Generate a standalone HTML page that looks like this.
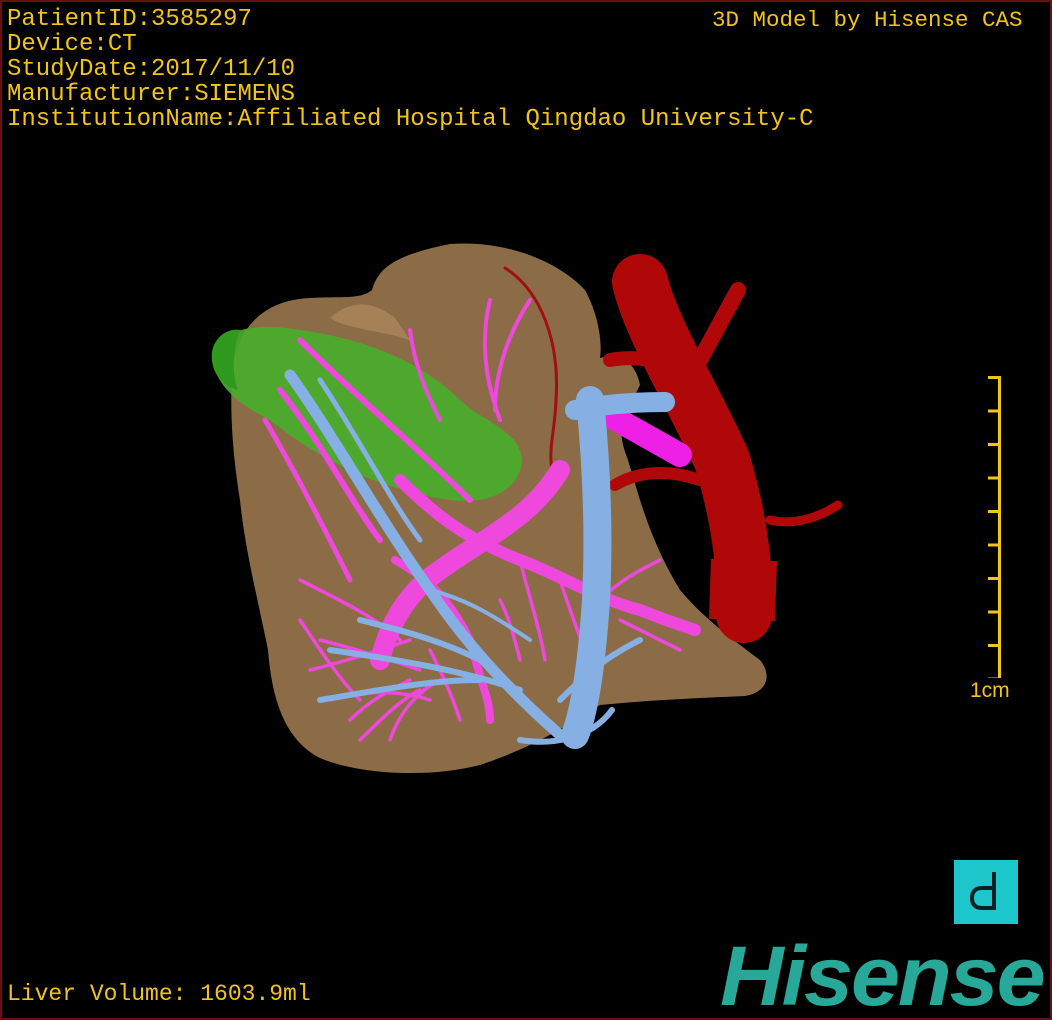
<!DOCTYPE html>
<html><head><meta charset="utf-8"><style>
html,body{margin:0;padding:0;background:#000;}
#w{position:relative;width:1052px;height:1020px;background:#000;overflow:hidden;box-sizing:border-box;border:2px solid #6a0f0f;}
.t{position:absolute;color:#f2c318;font-family:"Liberation Mono",monospace;white-space:pre;}
</style></head><body><div id="w">
<svg width="1052" height="1020" style="position:absolute;left:-2px;top:-2px">
<path d="M232,372 C236,330 262,300 310,298 C340,296 360,300 372,290 C378,268 395,255 450,244 C500,240 555,258 585,290 C600,318 602,345 600,358 C618,352 635,360 640,385 C628,410 612,420 628,460 C640,500 650,540 680,590 C705,620 740,645 760,660 C772,675 768,692 745,696 C700,698 650,700 600,705 C575,720 540,745 480,765 C430,778 360,775 320,758 C285,740 272,700 268,650 C258,600 245,550 240,500 C232,450 230,410 232,372 Z" fill="#8c6c47"/>
<path d="M330,318 C350,300 372,300 395,318 L410,340 C380,330 350,330 330,318Z" fill="#b08a60" opacity=".7"/>
<path d="M212,352 C220,330 255,322 300,330 C360,338 420,360 460,400 C480,420 520,430 522,460 C520,490 490,505 450,500 C380,490 320,460 270,420 C240,405 212,385 212,352Z" fill="#49ae2c" opacity=".92"/>
<path d="M212,352 C215,335 230,328 240,330 C232,350 232,375 238,390 C220,385 210,370 212,352Z" fill="#2f9a1e"/>
<g fill="none" stroke="#b00808" stroke-linecap="round">
<path d="M640,282 C652,330 690,390 722,460 C740,520 746,570 744,615" stroke-width="56"/>
<path d="M744,560 L742,620" stroke-width="66" stroke-linecap="butt"/>
<path d="M700,360 L738,290" stroke-width="16"/>
<path d="M610,360 C640,355 665,360 680,380" stroke-width="14"/>
<path d="M615,485 C640,470 670,470 700,480" stroke-width="12"/>
<path d="M770,520 C790,525 815,520 838,505" stroke-width="9"/>
<path d="M505,268 C540,290 560,340 556,400 C555,430 548,450 552,470" stroke="#a01010" stroke-width="3"/>
</g>
<g fill="none" stroke="#ee48dc" stroke-linecap="round">
<path d="M560,470 C530,520 480,540 440,570 C410,590 390,620 380,660" stroke-width="20"/>
<path d="M600,410 L680,455" stroke="#ee20e6" stroke-width="24"/>
<path d="M400,480 C440,520 470,540 520,560 C560,575 600,600 640,610 C660,618 680,625 695,630" stroke-width="12"/>
<path d="M395,560 C430,580 450,600 470,640 C480,680 490,700 490,720" stroke-width="8"/>
<path d="M280,390 C320,440 350,500 380,540" stroke-width="6"/>
<path d="M300,340 C360,400 420,450 470,500" stroke-width="6"/>
<path d="M265,420 C300,480 330,540 350,580" stroke-width="5"/>
<path d="M490,300 C480,340 485,380 500,420 M530,300 C510,330 495,370 495,410 M410,330 C415,370 430,400 440,420" stroke-width="4"/>
<path d="M300,580 C340,600 380,620 400,640 M320,640 C360,650 390,660 420,670 M330,700 C360,690 400,690 430,700 M350,720 C370,700 390,690 410,680 M390,740 C400,710 420,690 440,680 M460,720 C450,690 440,670 430,650 M300,620 C320,650 340,680 360,700 M310,670 C350,660 380,650 410,640 M360,740 C380,720 400,700 420,690" stroke-width="3.5"/>
<path d="M520,560 C530,600 540,630 545,660 M560,580 C570,610 580,640 590,660 M600,600 C620,580 640,570 660,560 M620,620 C640,630 660,640 680,650 M500,600 C510,620 515,640 520,660" stroke-width="3.5"/>
</g>
<g fill="none" stroke="#86b0e4" stroke-linecap="round">
<path d="M590,400 C595,450 600,520 596,600 C592,660 585,710 575,735" stroke-width="28"/>
<path d="M575,410 C600,405 630,402 665,402" stroke-width="20"/>
<path d="M290,375 C330,430 380,520 430,590 C470,650 520,700 560,735" stroke-width="11"/>
<path d="M320,380 C360,440 390,500 420,540" stroke-width="5"/>
<path d="M330,650 C400,660 460,670 520,690 M360,620 C400,630 440,640 480,660 M320,700 C380,690 430,680 480,680 M560,700 C580,680 600,660 640,640 M520,740 C550,745 590,740 612,710" stroke-width="6"/>
<path d="M430,590 C470,600 500,620 530,640" stroke-width="4"/>
</g>
</svg>
<div class="t" style="left:5px;top:5px;font-size:24px;line-height:25px">PatientID:3585297
Device:CT
StudyDate:2017/11/10
Manufacturer:SIEMENS
InstitutionName:Affiliated Hospital Qingdao University-C</div>
<div class="t" style="left:710px;top:5px;font-size:22.5px">3D Model by Hisense CAS</div>
<div class="t" style="left:5px;top:979px;font-size:23px">Liver Volume: 1603.9ml</div>
<div style="position:absolute;left:996px;top:374px;width:3px;height:302px;background:#f2c318"></div>
<div style="position:absolute;left:986px;top:374px;width:12px;height:302px;background:repeating-linear-gradient(to bottom,#f2c318 0 3px,transparent 3px 33.5px)"></div>
<div class="t" style="left:968px;top:677px;font-family:'Liberation Sans',sans-serif;font-size:21px">1cm</div>
<div style="position:absolute;left:952px;top:858px;width:64px;height:64px;background:#1cc6ca"></div>
<svg width="40" height="50" style="position:absolute;left:966px;top:866px"><path d="M26,4 V40 H14 C6,40 4,35 4,30 C4,24 7,20 14,20 H26" fill="none" stroke="#062224" stroke-width="4"/></svg>
<div style="position:absolute;left:718px;top:932px;color:#28a898;font-family:'Liberation Sans',sans-serif;font-weight:bold;font-style:italic;font-size:84px;line-height:84px;letter-spacing:-2px;transform:scaleX(1.05);transform-origin:left">Hisense</div>
</div></body></html>
